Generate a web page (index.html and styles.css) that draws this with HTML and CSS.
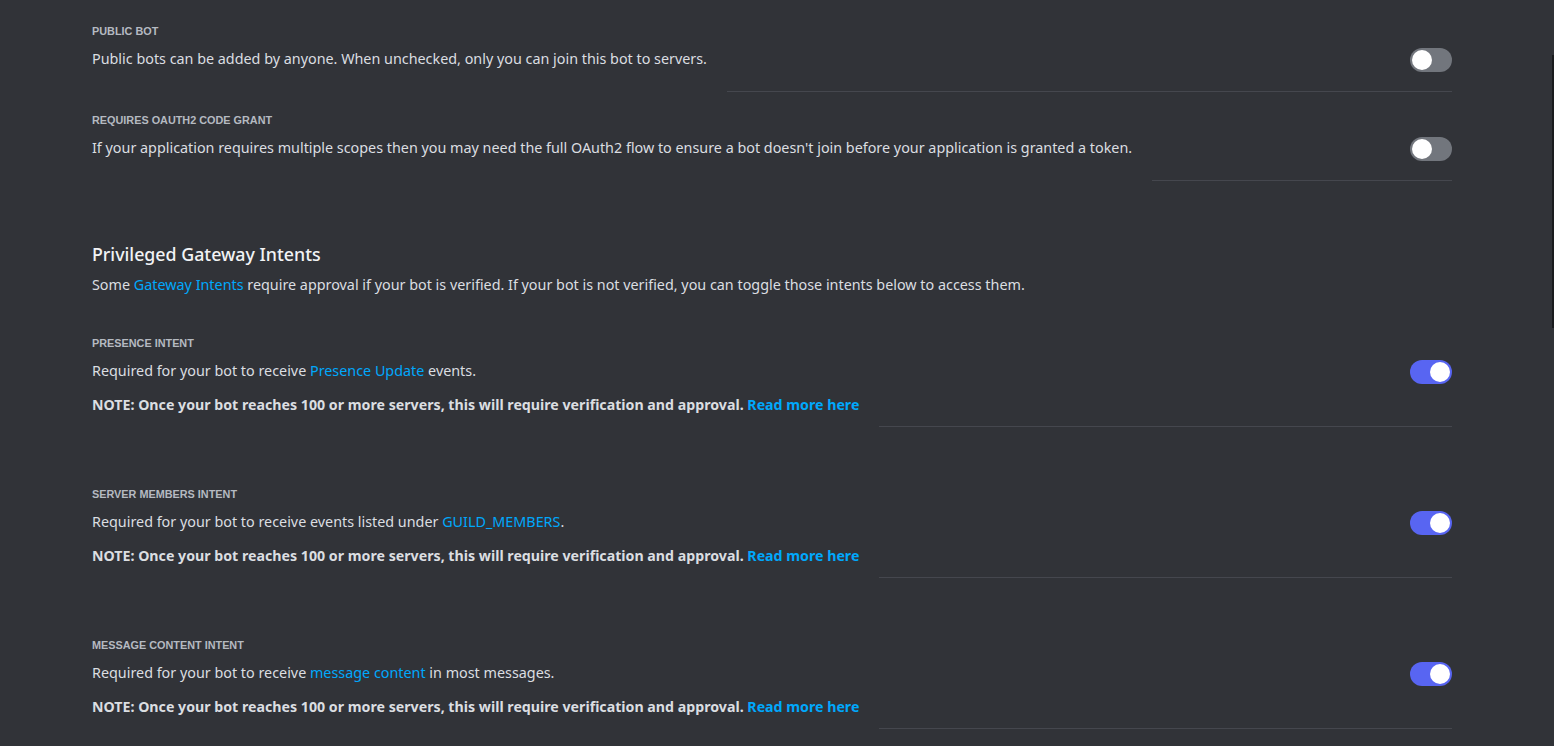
FILE: index.html
```html
<!DOCTYPE html>
<html lang="en">
<head>
<meta charset="utf-8">
<title>Bot settings</title>
<link rel="stylesheet" href="styles.css">
</head>
<body>
<div class="page">
  <div class="setting">
    <div class="label">Public Bot</div>
    <div class="row">
      <div class="text">
        <div class="desc">Public bots can be added by anyone. When unchecked, only you can join this bot to servers.</div>
      </div>
      <div class="side"><span class="toggle"><span class="knob"></span></span></div>
    </div>
  </div>
  <div class="setting">
    <div class="label">Requires OAuth2 Code Grant</div>
    <div class="row">
      <div class="text">
        <div class="desc">If your application requires multiple scopes then you may need the full OAuth2 flow to ensure a bot doesn't join before your application is granted a token.</div>
      </div>
      <div class="side"><span class="toggle"><span class="knob"></span></span></div>
    </div>
  </div>

  <div class="intents">
    <div class="intro">
      <h2 class="title">Privileged Gateway Intents</h2>
      <div class="desc">Some <a class="link">Gateway Intents</a> require approval if your bot is verified. If your bot is not verified, you can toggle those intents below to access them.</div>
    </div>
    <div class="setting">
      <div class="label">Presence Intent</div>
      <div class="row">
        <div class="text">
          <div class="desc">Required for your bot to receive <a class="link">Presence Update</a> events.</div>
          <div class="note">NOTE: Once your bot reaches 100 or more servers, this will require verification and approval. <a class="link">Read more here</a></div>
        </div>
        <div class="side"><span class="toggle on"><span class="knob"></span></span></div>
      </div>
    </div>
    <div class="setting">
      <div class="label">Server Members Intent</div>
      <div class="row">
        <div class="text">
          <div class="desc">Required for your bot to receive events listed under <a class="link">GUILD_MEMBERS</a>.</div>
          <div class="note">NOTE: Once your bot reaches 100 or more servers, this will require verification and approval. <a class="link">Read more here</a></div>
        </div>
        <div class="side"><span class="toggle on"><span class="knob"></span></span></div>
      </div>
    </div>
    <div class="setting">
      <div class="label">Message Content Intent</div>
      <div class="row">
        <div class="text">
          <div class="desc">Required for your bot to receive <a class="link">message content</a> in most messages.</div>
          <div class="note">NOTE: Once your bot reaches 100 or more servers, this will require verification and approval. <a class="link">Read more here</a></div>
        </div>
        <div class="side"><span class="toggle on"><span class="knob"></span></span></div>
      </div>
    </div>
  </div>
</div>
<div class="scrollbar"></div>
</body>
</html>
```
FILE: styles.css
```css
html, body {
  margin: 0;
  height: 100%;
  overflow: hidden;
  background: #313338;
}
body {
  font-family: "Noto Sans", "Liberation Sans", sans-serif;
  color: #dbdee1;
}
.page {
  padding: 3px 102px 0 92px;
}
.setting {
  padding-top: 20px;
}
.label {
  font-family: "Liberation Sans", Arial, sans-serif;
  font-size: 10.85px;
  font-weight: 700;
  line-height: 16px;
  text-transform: uppercase;
  color: #b5bac1;
  margin-bottom: 10px;
}
.row {
  display: flex;
}
.text {
  padding-bottom: 12px;
}
.desc {
  font-size: 14.35px;
  line-height: 20px;
  color: #dbdee1;
  margin-bottom: 11px;
}
.note {
  margin-top: 14px;
  font-size: 14.2px;
  line-height: 20px;
  font-weight: 700;
  color: #dbdee1;
}
.side {
  flex: 1;
  margin-left: 20px;
  border-bottom: 1px solid #45474e;
  display: flex;
  justify-content: flex-end;
  align-items: flex-start;
}
.toggle {
  width: 42px;
  height: 24px;
  margin-top: -1px;
  border-radius: 12px;
  background: #72767d;
  position: relative;
  flex: none;
}
.toggle .knob {
  position: absolute;
  top: 2px;
  left: 2px;
  width: 20px;
  height: 20px;
  border-radius: 50%;
  background: #fff;
}
.toggle.on {
  background: #5865f2;
}
.toggle.on .knob {
  left: 20px;
}
.link {
  color: #00a8fc;
  text-decoration: none;
}
.intro {
  padding-top: 61px;
}
.title {
  margin: 0 0 9px;
  font-size: 17.8px;
  line-height: 24px;
  font-weight: 500;
  color: #f2f3f5;
}
.intro .desc {
  margin: 0;
}
.intents .setting {
  padding-top: 59px;
}
.intents .intro + .setting {
  padding-top: 40px;
}
.scrollbar {
  position: fixed;
  right: 0;
  top: 55px;
  width: 2px;
  height: 273px;
  background: #1a1b1e;
}
```
